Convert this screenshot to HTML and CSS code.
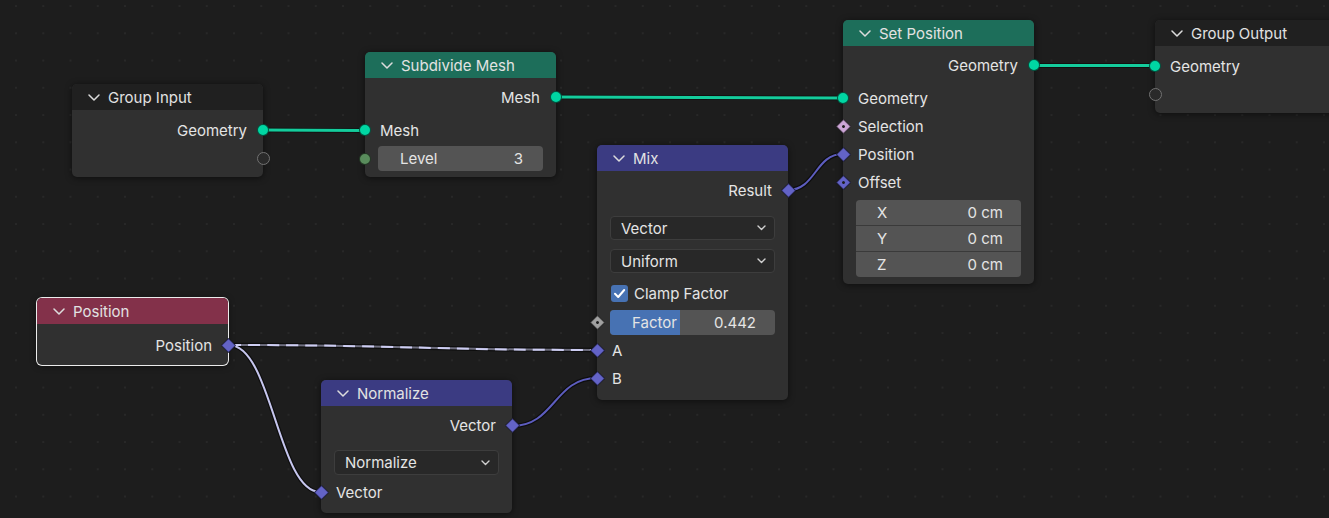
FILE: index.html
```html
<!DOCTYPE html>
<html>
<head>
<meta charset="utf-8">
<title>Geometry Nodes</title>
<link rel="stylesheet" href="styles.css">
</head>
<body>
<div class="canvas">
  <svg class="links" width="1329" height="518" viewBox="0 0 1329 518">
    <g class="under">
      <path d="M262,130 C314,130 314,130.5 366,130.5"/>
      <path d="M556,97 C700,97 700,98 843,98"/>
      <path d="M1034,65.5 L1156,65.5"/>
      <path d="M788,190 C816,190 815,154 843,154"/>
      <path d="M512,426 C555,426 554,378 597,378"/>
      <path d="M229,345 C400,345 430,350 597,350"/>
      <path d="M229,345 C272,345 278,492 320,492"/>
    </g>
    <g class="teal">
      <path d="M262,130 C314,130 314,130.5 366,130.5"/>
      <path d="M556,97 C700,97 700,98 843,98"/>
      <path d="M1034,65.5 L1156,65.5"/>
    </g>
    <g class="purple">
      <path d="M788,190 C816,190 815,154 843,154"/>
      <path d="M512,426 C555,426 554,378 597,378"/>
    </g>
    <path class="dash-base" d="M229,345 C400,345 430,350 597,350"/>
    <path class="dash-top" d="M229,345 C400,345 430,350 597,350"/>
    <path class="lav" d="M229,345 C272,345 278,492 320,492"/>
  </svg>

  <div class="node n-gin">
    <div class="hdr h-dark"><svg class="chev" width="12" height="7" viewBox="0 0 12 7"><path d="M1 1 L6 6 L11 1"/></svg><span>Group Input</span></div>
    <div class="body pt6 pb5">
      <div class="row out">Geometry<i class="sock geo"></i></div>
      <div class="row out"><i class="sock empty"></i></div>
    </div>
  </div>

  <div class="node n-sub">
    <div class="hdr h-green"><svg class="chev" width="12" height="7" viewBox="0 0 12 7"><path d="M1 1 L6 6 L11 1"/></svg><span>Subdivide Mesh</span></div>
    <div class="body pt5 pb6">
      <div class="row out">Mesh<i class="sock geo"></i></div>
      <div class="row in mt5">Mesh<i class="sock geo"></i></div>
      <div class="wrow h25 mt2"><i class="sock int"></i><div class="num"><span>Level</span><span>3</span></div></div>
    </div>
  </div>

  <div class="node n-setpos">
    <div class="hdr h-green"><svg class="chev" width="12" height="7" viewBox="0 0 12 7"><path d="M1 1 L6 6 L11 1"/></svg><span>Set Position</span></div>
    <div class="body pt5 pb7">
      <div class="row out">Geometry<i class="sock geo"></i></div>
      <div class="row in mt5">Geometry<i class="sock geo"></i></div>
      <div class="row in">Selection<i class="sock dia bool fdot"></i></div>
      <div class="row in">Position<i class="sock dia vsock"></i></div>
      <div class="row in">Offset<i class="sock dia vsock fdot"></i></div>
      <div class="vec">
        <div class="vrow"><span>X</span><span>0 cm</span></div>
        <div class="vrow"><span>Y</span><span>0 cm</span></div>
        <div class="vrow"><span>Z</span><span>0 cm</span></div>
      </div>
    </div>
  </div>

  <div class="node n-gout">
    <div class="hdr h-dark"><svg class="chev" width="12" height="7" viewBox="0 0 12 7"><path d="M1 1 L6 6 L11 1"/></svg><span>Group Output</span></div>
    <div class="body pt6 pb5">
      <div class="row in">Geometry<i class="sock geo"></i></div>
      <div class="row in"><i class="sock empty"></i></div>
    </div>
  </div>

  <div class="node n-mix">
    <div class="hdr h-blue"><svg class="chev" width="12" height="7" viewBox="0 0 12 7"><path d="M1 1 L6 6 L11 1"/></svg><span>Mix</span></div>
    <div class="body pt5 pb8">
      <div class="row out">Result<i class="sock dia vsock"></i></div>
      <div class="wrow h24 mt12"><div class="drop"><span>Vector</span><svg class="dchev" width="9" height="6" viewBox="0 0 9 6"><path d="M1 1 L4.5 4.5 L8 1"/></svg></div></div>
      <div class="wrow h24 mt9"><div class="drop"><span>Uniform</span><svg class="dchev" width="9" height="6" viewBox="0 0 9 6"><path d="M1 1 L4.5 4.5 L8 1"/></svg></div></div>
      <div class="row chk mt6"><span class="box"><svg width="17" height="17" viewBox="0 0 17 17"><path d="M4 8.8 L7.2 12 L13.2 5"/></svg></span>Clamp Factor</div>
      <div class="wrow h25 mt3"><i class="sock dia flt fdot"></i><div class="num slider"><div class="fill" style="width:42.6%"></div><span>Factor</span><span>0.442</span></div></div>
      <div class="row in mt1">A<i class="sock dia vsock"></i></div>
      <div class="row in">B<i class="sock dia vsock"></i></div>
    </div>
  </div>

  <div class="node n-pos">
    <div class="hdr h-red"><svg class="chev" width="12" height="7" viewBox="0 0 12 7"><path d="M1 1 L6 6 L11 1"/></svg><span>Position</span></div>
    <div class="body pt7 pb6">
      <div class="row out">Position<i class="sock dia vsock"></i></div>
    </div>
  </div>

  <div class="node n-norm">
    <div class="hdr h-blue"><svg class="chev" width="12" height="7" viewBox="0 0 12 7"><path d="M1 1 L6 6 L11 1"/></svg><span>Normalize</span></div>
    <div class="body pt5 pb7">
      <div class="row out">Vector<i class="sock dia vsock"></i></div>
      <div class="wrow h25 mt11"><div class="drop"><span>Normalize</span><svg class="dchev" width="9" height="6" viewBox="0 0 9 6"><path d="M1 1 L4.5 4.5 L8 1"/></svg></div></div>
      <div class="row in mt3">Vector<i class="sock dia vsock"></i></div>
    </div>
  </div>
</div>
</body>
</html>
```

FILE: styles.css
```css
html, body {
  margin: 0;
  padding: 0;
  background: #1d1d1d;
}

.canvas {
  position: relative;
  width: 1329px;
  height: 518px;
  overflow: hidden;
  background-color: #1d1d1d;
  background-image: radial-gradient(circle at center, #282828 0.9px, transparent 1.4px);
  background-size: 27.25px 27.25px;
  background-position: 2.4px -7.6px;
  font-family: Inter, "Noto Sans", "DejaVu Sans", sans-serif;
  font-size: 15px;
  color: #e4e4e4;
}

.links {
  position: absolute;
  left: 0;
  top: 0;
  z-index: 0;
}
.links path { fill: none; }
.links .under path { stroke: rgba(0, 0, 0, 0.55); stroke-width: 4.5; }
.links .teal path { stroke: #14cc9c; stroke-width: 3; }
.links .purple path { stroke: #5d5dbf; stroke-width: 2; }
.links .dash-base { stroke: #6f6f80; stroke-width: 2; }
.links .dash-top { stroke: #cdcdf2; stroke-width: 2; stroke-dasharray: 12 7; }
.links .lav { stroke: #c6c6ee; stroke-width: 2; }

/* nodes */
.node {
  position: absolute;
  z-index: 1;
  width: 191px;
  background: #303030;
  border-radius: 5px;
  box-shadow: 0 1px 6px rgba(0, 0, 0, 0.55);
}
.n-gin { left: 72px; top: 84px; }
.n-sub { left: 365px; top: 52px; }
.n-setpos { left: 843px; top: 20px; }
.n-gout { left: 1155px; top: 20px; }
.n-mix { left: 597px; top: 145px; }
.n-pos { left: 37px; top: 298px; box-shadow: 0 0 0 1px #ececec, 0 1px 6px rgba(0, 0, 0, 0.55); }
.n-norm { left: 321px; top: 380px; }

.hdr {
  height: 26px;
  display: flex;
  align-items: center;
  gap: 8px;
  padding-left: 16px;
  border-radius: 5px 5px 0 0;
  color: #e2e2e2;
}
.h-dark { background: #202020; }
.h-green { background: #1d6e5a; }
.h-blue { background: #3b3b82; }
.h-red { background: #83314a; }

.chev path {
  fill: none;
  stroke: #dcdcdc;
  stroke-width: 1.5;
  stroke-linecap: round;
  stroke-linejoin: round;
}

.body { display: flex; flex-direction: column; }
.pt5 { padding-top: 5px; }
.pt6 { padding-top: 6px; }
.pt7 { padding-top: 7px; }
.pb5 { padding-bottom: 5px; }
.pb6 { padding-bottom: 6px; }
.pb7 { padding-bottom: 7px; }
.pb8 { padding-bottom: 8px; }
.mt1 { margin-top: 1px; }
.mt2 { margin-top: 2px; }
.mt3 { margin-top: 3px; }
.mt5 { margin-top: 5px; }
.mt6 { margin-top: 6px; }
.mt9 { margin-top: 9px; }
.mt11 { margin-top: 11px; }
.mt12 { margin-top: 12px; }

.row {
  position: relative;
  height: 28px;
  display: flex;
  align-items: center;
  padding: 0 16px 0 15px;
  white-space: nowrap;
}
.row.out { justify-content: flex-end; }
.row.chk { padding-left: 14px; gap: 6px; }

.box {
  width: 17px;
  height: 17px;
  border-radius: 3px;
  background: #4772b3;
  display: block;
}
.box svg { display: block; }
.box path {
  fill: none;
  stroke: #ffffff;
  stroke-width: 2;
  stroke-linecap: round;
  stroke-linejoin: round;
}

/* sockets */
.sock {
  position: absolute;
  top: 50%;
  width: 12px;
  height: 12px;
  margin-top: -6px;
  box-sizing: border-box;
  border-radius: 50%;
  border: 1px solid rgba(0, 0, 0, 0.6);
  z-index: 2;
}
.out .sock { right: -6px; }
.in .sock, .wrow .sock { left: -6px; }
.geo { background: #00d6a3; }
.int { background: #598c5c; }
.empty { width: 13px; height: 13px; margin-top: -6.5px; background: #2a2a2a; border: 1.5px solid #727272; }
.out .empty { right: -6.5px; }
.in .empty { left: -6.5px; }

.sock.dia {
  width: 11px;
  height: 11px;
  margin-top: -5.5px;
  border-radius: 1px;
  transform: rotate(45deg);
}
.out .sock.dia { right: -5.5px; }
.in .sock.dia, .wrow .sock.dia { left: -5.5px; }
.vsock { background: #6363c7; }
.bool { background: #cca6d6; }
.flt { background: #a1a1a1; }
.fdot::after {
  content: "";
  position: absolute;
  left: 50%;
  top: 50%;
  width: 3px;
  height: 3px;
  margin: -1.5px 0 0 -1.5px;
  border-radius: 50%;
  background: #1e1e1e;
}

/* widgets */
.wrow {
  position: relative;
  padding: 0 13px;
  box-sizing: border-box;
}
.h24 { height: 24px; }
.h25 { height: 25px; }

.num {
  position: relative;
  height: 100%;
  display: flex;
  align-items: center;
  justify-content: space-between;
  padding: 0 20px 0 22px;
  background: #545454;
  border-radius: 4px;
  overflow: hidden;
}
.num span { position: relative; }
.slider { padding-left: 22px; padding-right: 19px; }
.fill {
  position: absolute;
  left: 0;
  top: 0;
  bottom: 0;
  background: #4772b3;
}

.drop {
  height: 100%;
  box-sizing: border-box;
  display: flex;
  align-items: center;
  justify-content: space-between;
  padding: 0 8px 0 10px;
  background: #282828;
  border: 1px solid #3d3d3d;
  border-radius: 4px;
}
.dchev path {
  fill: none;
  stroke: #d0d0d0;
  stroke-width: 1.4;
  stroke-linecap: round;
  stroke-linejoin: round;
}

.vec {
  margin: 4px 13px 0;
  height: 77px;
  display: flex;
  flex-direction: column;
  gap: 1px;
  background: #3a3a3a;
  border-radius: 4px;
  overflow: hidden;
}
.vrow {
  flex: 1;
  display: flex;
  align-items: center;
  justify-content: space-between;
  padding: 0 18px 0 21px;
  background: #545454;
}
```
